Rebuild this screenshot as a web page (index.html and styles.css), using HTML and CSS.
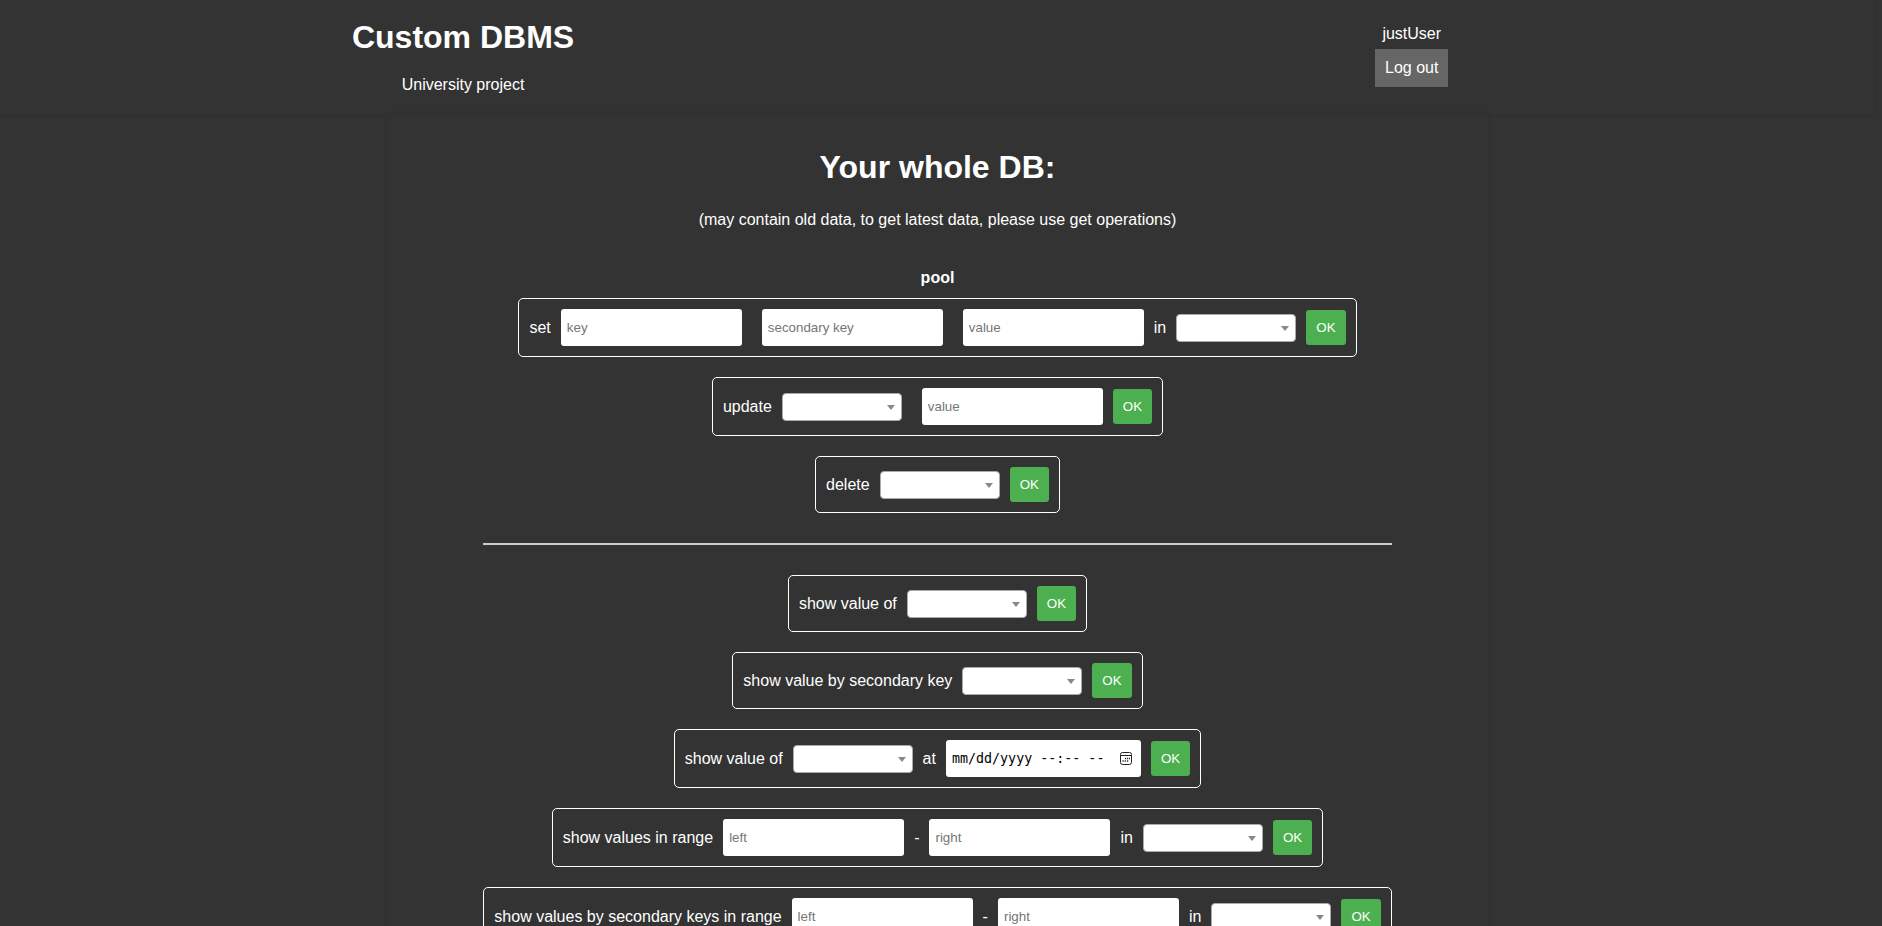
FILE: index.html
```html
<!DOCTYPE html>
<html lang="en">
<head>
<meta charset="utf-8">
<title>Custom DBMS</title>
<link rel="stylesheet" href="styles.css">
</head>
<body>
<header class="header">
  <div class="brand">
    <h1 class="brand-title">Custom DBMS</h1>
    <p class="brand-note">University project</p>
  </div>
  <div class="user">
    <span>justUser</span>
    <a class="logout" href="#">Log out</a>
  </div>
</header>
<main class="main">
  <h1 class="title">Your whole DB:</h1>
  <p class="note">(may contain old data, to get latest data, please use get operations)</p>
  <h2 class="pool">pool</h2>
  <div class="operations">
    <form class="op">
      <span>set</span>
      <div class="fields">
        <input class="field" type="text" placeholder="key" aria-label="key">
        <input class="field" type="text" placeholder="secondary key" aria-label="secondary key">
        <input class="field" type="text" placeholder="value" aria-label="value">
      </div>
      <label for="set-in">in</label>
      <select class="select" id="set-in"></select>
      <button class="ok" type="button">OK</button>
    </form>
    <form class="op">
      <label for="update-key">update</label>
      <div class="fields">
        <select class="select" id="update-key"></select>
        <input class="field" type="text" placeholder="value" aria-label="value">
      </div>
      <button class="ok" type="button">OK</button>
    </form>
    <form class="op">
      <label for="delete-key">delete</label>
      <select class="select" id="delete-key"></select>
      <button class="ok" type="button">OK</button>
    </form>
    <hr class="divider">
    <form class="op">
      <label for="show-key">show value of</label>
      <select class="select" id="show-key"></select>
      <button class="ok" type="button">OK</button>
    </form>
    <form class="op">
      <label for="show-secondary">show value by secondary key</label>
      <select class="select" id="show-secondary"></select>
      <button class="ok" type="button">OK</button>
    </form>
    <form class="op">
      <label for="show-at-key">show value of</label>
      <select class="select" id="show-at-key"></select>
      <label for="show-at">at</label>
      <div class="date">
        <input class="date-input" type="text" id="show-at" placeholder="mm/dd/yyyy --:-- --">
        <button class="date-pick" type="button" aria-label="Show date picker">
          <svg width="12" height="13" viewBox="0 0 12 13" fill="none" stroke="#222">
            <rect x="0.5" y="0.5" width="11" height="12" rx="2"/>
            <path d="M0.5 3.5h11"/>
            <path d="M5 6.5h1.200M7 6.500h1.200M9 6.500h1M2.500 9h1.200M4.700 9h1.200M7 9h1.200" stroke-width="1.300"/>
          </svg>
        </button>
      </div>
      <button class="ok" type="button">OK</button>
    </form>
    <form class="op">
      <label for="range-left">show values in range</label>
      <input class="field" type="text" id="range-left" placeholder="left">
      <span>-</span>
      <input class="field" type="text" placeholder="right" aria-label="right">
      <label for="range-in">in</label>
      <select class="select" id="range-in"></select>
      <button class="ok" type="button">OK</button>
    </form>
    <form class="op">
      <label for="srange-left">show values by secondary keys in range</label>
      <input class="field" type="text" id="srange-left" placeholder="left">
      <span>-</span>
      <input class="field" type="text" placeholder="right" aria-label="right">
      <label for="srange-in">in</label>
      <select class="select" id="srange-in"></select>
      <button class="ok" type="button">OK</button>
    </form>
  </div>
</main>
</body>
</html>
```

FILE: styles.css
```css
* {
  box-sizing: border-box;
}

html {
  scrollbar-width: none;
}

body {
  margin: 0;
  padding-right: 7px;
  background: #333;
  color: #fff;
  font: 16px/18px "Liberation Sans", Arial, sans-serif;
}

.header {
  display: flex;
  justify-content: space-between;
  align-items: flex-start;
  padding-block: 19px 20px;
  padding-inline: 18.77% 22.75%;
  box-shadow: 0 0 5px rgba(0, 0, 0, 0.1);
}

.brand {
  text-align: center;
}

.brand-title,
.title {
  margin: 0;
  font-size: 32px;
  line-height: 37px;
}

.brand-note {
  margin: 20px 0 0;
}

.user {
  display: flex;
  flex-direction: column;
  align-items: center;
  gap: 6px;
  padding-top: 6px;
}

.logout {
  padding: 10px;
  background: #666;
  color: #fff;
  text-decoration: none;
}

.main {
  max-width: 1100px;
  margin: 0 auto;
  padding: 35px 0 20px;
  text-align: center;
  box-shadow: 0 0 5px rgba(0, 0, 0, 0.1);
}

.note {
  margin: 25px 0 0;
}

.pool {
  margin: 40px 0 11px;
  font-size: 16px;
  line-height: 18px;
}

.operations {
  display: flex;
  flex-direction: column;
  align-items: center;
  gap: 20px;
  width: fit-content;
  margin: 0 auto;
}

.op {
  display: flex;
  align-items: center;
  gap: 10px;
  padding: 10px;
  border: 1px solid #fff;
  border-radius: 5px;
}

.fields {
  display: flex;
  align-items: center;
  gap: 20px;
}

.field {
  width: 181px;
  height: 37px;
  padding: 0 6px;
  border: 0;
  border-radius: 3px;
  background: #fff;
}

.date {
  display: flex;
  align-items: center;
  width: 195px;
  height: 37px;
  padding: 0 9px 0 6px;
  border-radius: 3px;
  background: #fff;
}

.date-input {
  flex: 1;
  min-width: 0;
  padding: 0;
  border: 0;
  background: none;
  color: #000;
  font-family: monospace;
}

.date-input::placeholder {
  color: #000;
}

.date-pick {
  display: flex;
  padding: 0;
  border: 0;
  background: none;
}

.select {
  width: 120px;
  height: 28px;
  appearance: none;
  border: 1px solid #aaa;
  border-radius: 4px;
  background: #fff url("data:image/svg+xml,%3Csvg xmlns='http://www.w3.org/2000/svg' width='8' height='5'%3E%3Cpath d='M0 0h8L4 5z' fill='%23888'/%3E%3C/svg%3E") no-repeat right 6px top 11px;
}

.ok {
  padding: 10px;
  border: 0;
  border-radius: 3px;
  background: #4caf50;
  color: #fff;
}

.divider {
  align-self: stretch;
  height: 2px;
  margin: 10px 0;
  border: 0;
  background: #ccc;
}
```
